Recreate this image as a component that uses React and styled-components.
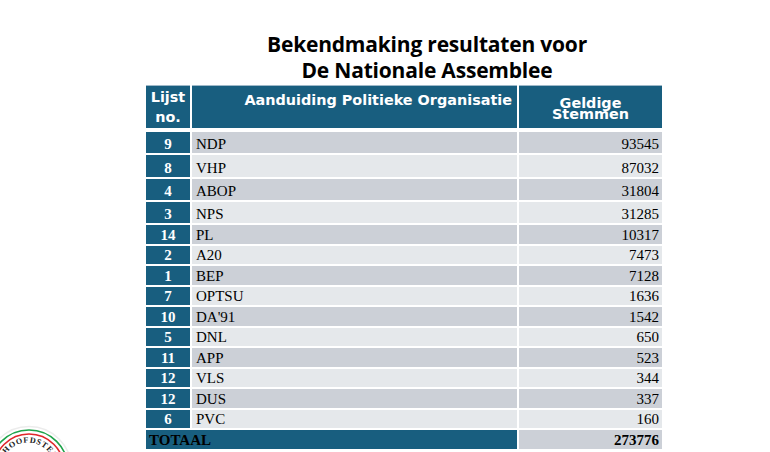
import React from "react";
import styled, { createGlobalStyle } from "styled-components";

const Global = createGlobalStyle`
  html, body { margin: 0; padding: 0; background: #ffffff; }
  body { width: 770px; height: 452px; overflow: hidden; }
`;

const Page = styled.div`
  position: relative;
  width: 770px;
  height: 452px;
  background: #ffffff;
  display: flex;
  flex-direction: column;
`;

const Title = styled.h1`
  margin: 0;
  padding: 31px 0 0 84px;
  text-align: center;
  font-family: "Open Sans", "Liberation Sans", sans-serif;
  font-weight: 700;
  font-size: 21px;
  line-height: 26px;
  color: #000;
  letter-spacing: -0.2px;
`;

const Table = styled.div`
  margin: 3px 0 0 146px;
  width: 516px;
  display: grid;
  grid-template-columns: 44px 325px 143px;
  column-gap: 2px;
  row-gap: 2px;
`;

const HeadCell = styled.div`
  background: #185e7f;
  color: #ffffff;
  font-family: "DejaVu Sans", Verdana, sans-serif;
  font-weight: 700;
  font-size: 14.4px;
  height: 42px;
  box-sizing: border-box;
  display: flex;
  flex-direction: column;
  justify-content: ${(p) => p.$v || "flex-start"};
  align-items: ${(p) => p.$h || "center"};
  text-align: ${(p) => p.$align || "center"};
  line-height: ${(p) => p.$lh || "17px"};
  padding: ${(p) => p.$pad || "0"};
  box-shadow: 0 -1px 0 #9fb9c9;
  margin-bottom: 2px;
  white-space: nowrap;
`;

const NumCell = styled.div`
  background: #185e7f;
  color: #ffffff;
  font-family: "Liberation Serif", "Times New Roman", serif;
  font-weight: 700;
  font-size: 15px;
  height: ${(p) => p.$h}px;
  display: flex;
  align-items: flex-end;
  justify-content: center;
  line-height: 1;
  padding-bottom: 1px;
  box-sizing: border-box;
`;

const NameCell = styled.div`
  background: ${(p) => (p.$dark ? "#ccd0d7" : "#e5e8eb")};
  color: #000;
  font-family: "Liberation Serif", "Times New Roman", serif;
  font-size: 15px;
  height: ${(p) => p.$h}px;
  display: flex;
  align-items: flex-end;
  padding: 0 0 1px 4px;
  box-sizing: border-box;
  line-height: 1;
`;

const VoteCell = styled(NameCell)`
  justify-content: flex-end;
  padding: 0 3px 1px 0;
  font-weight: ${(p) => (p.$bold ? 700 : 400)};
`;

const TotalLabel = styled.div`
  grid-column: 1 / 3;
  background: #185e7f;
  color: #000;
  font-family: "Liberation Serif", "Times New Roman", serif;
  font-weight: 700;
  font-size: 15px;
  height: 19px;
  display: flex;
  align-items: flex-end;
  padding: 0 0 1px 3px;
  box-sizing: border-box;
  line-height: 1;
`;

const Seal = styled.svg`
  position: absolute;
  left: 0;
  top: 418px;
`;

const rows = [
  ["9", "NDP", "93545"],
  ["8", "VHP", "87032"],
  ["4", "ABOP", "31804"],
  ["3", "NPS", "31285"],
  ["14", "PL", "10317"],
  ["2", "A20", "7473"],
  ["1", "BEP", "7128"],
  ["7", "OPTSU", "1636"],
  ["10", "DA'91", "1542"],
  ["5", "DNL", "650"],
  ["11", "APP", "523"],
  ["12", "VLS", "344"],
  ["12", "DUS", "337"],
  ["6", "PVC", "160"],
];

export default function App() {
  return (
    <Page>
      <Global />
      <Title>
        Bekendmaking resultaten voor
        <br />
        De Nationale Assemblee
      </Title>
      <Table>
        <HeadCell $v="flex-start" $lh="20px" $pad="1px 0 0 0">
          <span>Lijst</span>
          <span>no.</span>
        </HeadCell>
        <HeadCell $h="flex-end" $align="right" $pad="6px 5px 0 0">
          Aanduiding Politieke Organisatie
        </HeadCell>
        <HeadCell $v="center" $lh="11px" $pad="3px 0 0 0">
          <span>Geldige</span>
          <span>Stemmen</span>
        </HeadCell>
        {rows.map(([no, name, votes], i) => {
          const h = i < 4 ? 21.3 : 18.5;
          const dark = i % 2 === 0;
          return (
            <React.Fragment key={i}>
              <NumCell $h={h}>{no}</NumCell>
              <NameCell $h={h} $dark={dark}>{name}</NameCell>
              <VoteCell $h={h} $dark={dark}>{votes}</VoteCell>
            </React.Fragment>
          );
        })}
        <TotalLabel>TOTAAL</TotalLabel>
        <VoteCell $h={19} $dark $bold>273776</VoteCell>
      </Table>
      <Seal width="90" height="34" viewBox="0 418 90 34">
        <defs>
          <path id="sealText" d="M 6 454 A 27 27 0 0 1 55 468" />
        </defs>
        <circle cx="29" cy="469" r="42.5" fill="#ffffff" stroke="#ececec" strokeWidth="1.5" />
        <circle cx="29" cy="469" r="39" fill="none" stroke="#1ea34a" strokeWidth="1.6" />
        <circle cx="29" cy="469" r="35" fill="none" stroke="#e0262b" strokeWidth="1.6" />
        <text fontFamily="Liberation Serif, serif" fontWeight="700" fontSize="8.2" fill="#222" letterSpacing="0.7">
          <textPath href="#sealText">HOOFDSTEDELIJK</textPath>
        </text>
      </Seal>
    </Page>
  );
}
